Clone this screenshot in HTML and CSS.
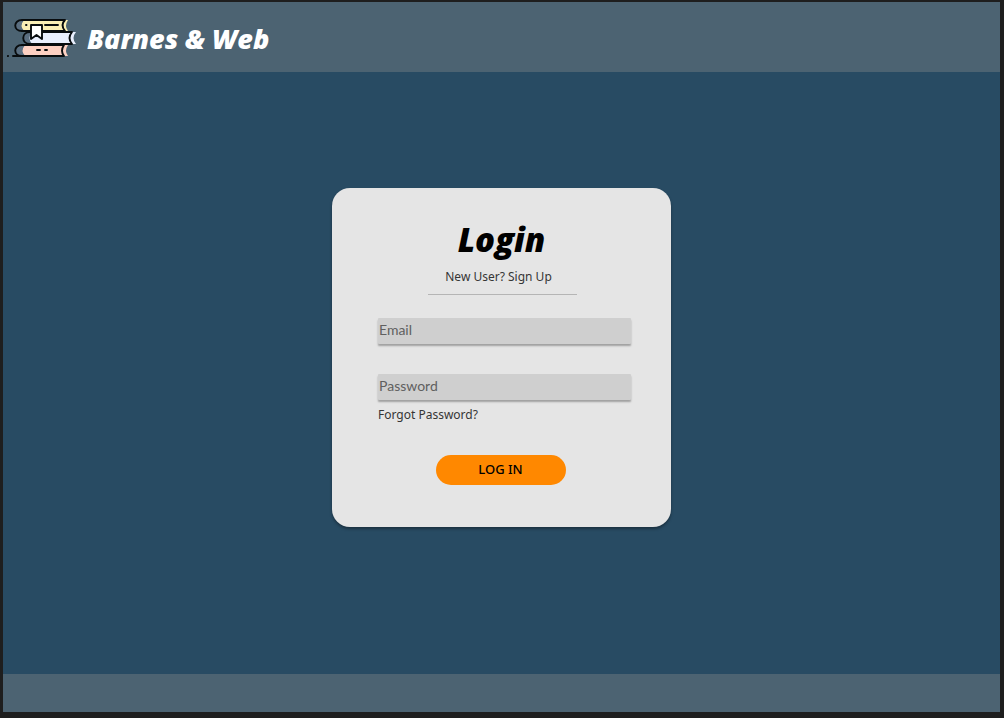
FILE: index.html
```html
<!DOCTYPE html>
<html lang="en">
<head>
<meta charset="utf-8">
<title>Barnes &amp; Web</title>
<link rel="stylesheet" href="styles.css">
</head>
<body>
<div class="page">
  <header class="header">
    <svg class="logo" viewBox="0 0 70 42" aria-hidden="true">
      <path d="M17 2H61Q57 8 61 13H17Q11 8 17 2Z" fill="#f9eeb4"/>
      <path d="M24 14H69Q64 20 69 26H24Q19 20 24 14Z" fill="#e9effd"/>
      <path d="M18 27H61Q57 33 61 38H18Q12 33 18 27Z" fill="#fdd0c2"/>
      <path d="M17 2H15Q8 3 8 8T15 13H17Q12 8 17 2ZM25 14H23Q16 15 16 20T23 26H25Q20 20 25 14ZM18 27H15Q8 28 8 33T15 38H18Q13 33 18 27Z" fill="#5a6e80"/>
      <g fill="none" stroke="#080c0e" stroke-width="1.9" stroke-linecap="round" stroke-linejoin="round">
        <path d="M58 2H15C6 2 6 13 15 13H58M58 2Q53 7 58 13M38 7H51M19 7H19.5"/>
        <path d="M65 14H23C14 14 14 26 23 26H65M65 14Q60 20 65 26"/>
        <path d="M57 27H15C6 27 6 38 15 38H57M57 27Q53 33 57 38M30 32H33M38 32H40M6 38H57M.9 38H1.100"/>
        <path d="M24 7H35V21L29.500 17L24 21Z" fill="#fff"/>
      </g>
    </svg>
    <span class="brand">Barnes &amp; Web</span>
  </header>
  <main class="main">
    <form class="card">
      <h1 class="title">Login</h1>
      <a class="link signup" href="#">New User? Sign Up</a>
      <hr class="rule">
      <div class="fields">
        <input class="field" type="email" placeholder="Email" aria-label="Email">
        <input class="field" type="password" placeholder="Password" aria-label="Password">
        <a class="link" href="#">Forgot Password?</a>
      </div>
      <button class="submit" type="button">LOG IN</button>
    </form>
  </main>
  <footer class="footer"></footer>
</div>
</body>
</html>
```
FILE: styles.css
```css
* { box-sizing: border-box; }
body {
  margin: 0;
  background: #1e1e1e;
  font-family: "Noto Sans", sans-serif;
}
.page {
  display: flex;
  flex-direction: column;
  min-height: 100vh;
  border: solid #1e1e1e;
  border-width: 2px 4px 6px 3px;
  background: #284b63;
}
.header {
  display: flex;
  align-items: center;
  gap: 10px;
  height: 70px;
  padding: 3px 4px 0;
  background: #4c6372;
}
.logo { width: 70px; height: 42px; }
.brand {
  font: italic 800 27px/36px "Open Sans", sans-serif;
  color: #fff;
}
.main {
  flex: 1;
  display: flex;
  justify-content: center;
  align-items: center;
  padding-bottom: 32px;
}
.card {
  display: flex;
  flex-direction: column;
  align-items: center;
  width: 339px;
  padding: 32px 40px 42px 46px;
  border-radius: 18px;
  background: #e5e5e5;
  box-shadow: 0 2px 3px rgba(0, 0, 0, .35);
}
.title {
  margin: 0 6px 7px 0;
  font: italic 800 33px/40px "Open Sans", sans-serif;
  color: #000;
}
.link {
  font-size: 12px;
  line-height: 20px;
  color: #353535;
  text-decoration: none;
}
.signup { margin-right: 12px; }
.rule {
  width: 149px;
  margin: 7px 4px 23px 0;
  border: 0;
  border-top: 1px solid #b5b5b5;
}
.fields {
  display: flex;
  flex-direction: column;
  align-items: flex-start;
  width: 100%;
}
.field {
  width: 100%;
  height: 26px;
  margin: 0 0 30px;
  padding: 0 1px 2px;
  border: 0;
  border-radius: 1px;
  background: #cfcfcf;
  box-shadow: 0 2px 2px rgba(0, 0, 0, .3);
  font: 14px Lato, sans-serif;
  color: #353535;
}
.field[type="password"] { margin-bottom: 5px; }
.field::placeholder { color: #606060; opacity: 1; }
.submit {
  width: 130px;
  height: 30px;
  margin: 30px 8px 0 0;
  padding: 0 0 2px;
  border: 0;
  border-radius: 15px;
  background: #ff8800;
  font: 500 13px "Noto Sans", sans-serif;
  color: #000;
}
.footer { height: 38px; background: #4c6372; }
```
